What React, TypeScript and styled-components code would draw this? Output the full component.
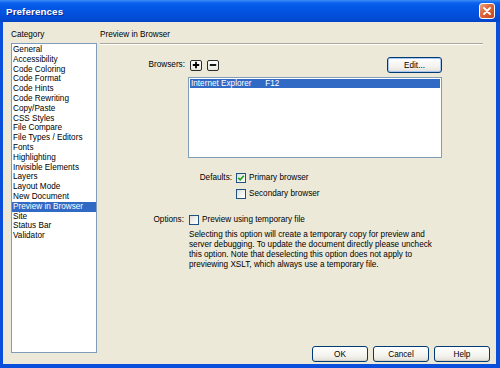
import React from 'react';
import styled, { createGlobalStyle } from 'styled-components';

const GlobalStyle = createGlobalStyle`
  html, body {
    margin: 0;
    padding: 0;
    background: #ffffff;
  }
  body {
    font-family: "Liberation Sans", Arial, sans-serif;
    font-size: 8.2px;
    color: #000;
  }
`;

const Window = styled.div`
  width: 500px;
  height: 368px;
  display: flex;
  flex-direction: column;
  background: #0a4fdc;
  box-sizing: border-box;
`;

const TitleBar = styled.div`
  height: 22px;
  flex: none;
  display: flex;
  align-items: center;
  justify-content: space-between;
  padding: 0 5px 0 6px;
  background: linear-gradient(
    to bottom,
    #3d8cf7 0px,
    #0a61ee 3px,
    #0358e6 7px,
    #0354e1 50%,
    #024bd4 85%,
    #0143c4 100%
  );
`;

const Title = styled.span`
  color: #fff;
  font-weight: bold;
  font-size: 9.8px;
  letter-spacing: 0.1px;
  text-shadow: 1px 1px 0 #0a2a9a;
`;

const CloseButton = styled.div`
  width: 14px;
  height: 14px;
  border: 1px solid #fff;
  border-radius: 3px;
  display: flex;
  align-items: center;
  justify-content: center;
  background: linear-gradient(135deg, #f0a585 0%, #e06a3f 40%, #c8441a 100%);
`;

const Body = styled.div`
  flex: 1;
  display: flex;
  margin: 0 4px 4px 3px;
  padding: 8px 6px 2px 8px;
  background: #ece9d8;
`;

const CategoryColumn = styled.div`
  width: 86px;
  display: flex;
  flex-direction: column;
`;

const PaneLabel = styled.div`
  height: 10px;
  line-height: 10px;
  white-space: nowrap;
`;

const CategoryList = styled.div`
  flex: 1;
  margin: 3px 0 9px;
  padding: 1px 0;
  border: 1px solid #7f9db9;
  background: #fff;
`;

const CategoryItem = styled.div<{ $selected?: boolean }>`
  height: 9.8px;
  line-height: 9.8px;
  padding-left: 1px;
  white-space: nowrap;
  background: ${(p) => (p.$selected ? '#316ac5' : 'transparent')};
  color: ${(p) => (p.$selected ? '#fff' : '#000')};
`;

const MainColumn = styled.div`
  flex: 1;
  margin-left: 3px;
  display: flex;
  flex-direction: column;
`;

const Separator = styled.div`
  height: 1px;
  margin: 3px 7px 0 0;
  background: #aca899;
  border-bottom: 1px solid #fff;
`;

const Form = styled.div`
  width: 342px;
  display: flex;
  flex-direction: column;
`;

const Row = styled.div<{ $top: number; $indent?: number }>`
  display: flex;
  align-items: center;
  margin-top: ${(p) => p.$top}px;
  margin-left: ${(p) => p.$indent ?? 0}px;
`;

const FieldLabel = styled.span<{ $width: number }>`
  width: ${(p) => p.$width}px;
  flex: none;
  text-align: right;
  line-height: 10px;
  white-space: nowrap;
`;

const IconButton = styled.div`
  width: 10px;
  height: 9px;
  margin-left: 5px;
  border: 1px solid #2b2b2b;
  border-radius: 2px;
  background: linear-gradient(#ffffff, #e9e7de);
  display: flex;
  align-items: center;
  justify-content: center;
`;

const PushButton = styled.div<{ $default?: boolean; $width: number }>`
  width: ${(p) => p.$width}px;
  height: 16px;
  box-sizing: border-box;
  border: 1px solid #003c74;
  border-radius: 3px;
  display: flex;
  align-items: center;
  justify-content: center;
  background: linear-gradient(#ffffff 0%, #f4f3ee 60%, #e3e1d7 100%);
  box-shadow: ${(p) =>
    p.$default ? 'inset 0 0 0 1px #a9c6f3' : 'inset 0 -1px 0 #d6d0c5'};
`;

const BrowserList = styled.div`
  margin: 4px 0 0 88px;
  width: 254px;
  height: 81px;
  box-sizing: border-box;
  border: 1px solid #7f9db9;
  background: #fff;
  padding: 1px;
`;

const BrowserItem = styled.div<{ $selected?: boolean }>`
  height: 9px;
  line-height: 9px;
  padding-left: 1px;
  white-space: pre;
  background: ${(p) => (p.$selected ? '#316ac5' : 'transparent')};
  color: ${(p) => (p.$selected ? '#fff' : '#000')};
`;

const CheckBox = styled.span`
  width: 10px;
  height: 10px;
  flex: none;
  box-sizing: border-box;
  border: 1px solid #1c5180;
  background: linear-gradient(135deg, #dcdcd7 0%, #f4f4f1 60%, #ffffff 100%);
  display: flex;
  align-items: center;
  justify-content: center;
`;

const CheckText = styled.span`
  margin-left: 3px;
  line-height: 10px;
  white-space: nowrap;
`;

const Description = styled.p`
  margin: 5px 0 0 89px;
  line-height: 10px;
  white-space: nowrap;
`;

const ButtonRow = styled.div`
  margin-top: auto;
  display: flex;
  justify-content: flex-end;
  gap: 5px;
`;

const categories = [
  'General',
  'Accessibility',
  'Code Coloring',
  'Code Format',
  'Code Hints',
  'Code Rewriting',
  'Copy/Paste',
  'CSS Styles',
  'File Compare',
  'File Types / Editors',
  'Fonts',
  'Highlighting',
  'Invisible Elements',
  'Layers',
  'Layout Mode',
  'New Document',
  'Preview in Browser',
  'Site',
  'Status Bar',
  'Validator',
];

const Check: React.FC<{ checked?: boolean }> = ({ checked }) => (
  <CheckBox>
    {checked && (
      <svg width="8" height="8" viewBox="0 0 8 8">
        <path d="M1.2 3.8 L3.2 5.8 L6.8 1.8" fill="none" stroke="#21a121" strokeWidth="1.7" />
      </svg>
    )}
  </CheckBox>
);

export default function App() {
  return (
    <>
      <GlobalStyle />
      <Window>
        <TitleBar>
          <Title>Preferences</Title>
          <CloseButton>
            <svg width="10" height="10" viewBox="0 0 10 10">
              <path d="M2 2 L8 8 M8 2 L2 8" stroke="#fff" strokeWidth="1.8" strokeLinecap="round" />
            </svg>
          </CloseButton>
        </TitleBar>
        <Body>
          <CategoryColumn>
            <PaneLabel>Category</PaneLabel>
            <CategoryList>
              {categories.map((c) => (
                <CategoryItem key={c} $selected={c === 'Preview in Browser'}>
                  {c}
                </CategoryItem>
              ))}
            </CategoryList>
          </CategoryColumn>
          <MainColumn>
            <PaneLabel>Preview in Browser</PaneLabel>
            <Separator />
            <Form>
              <Row $top={12}>
                <FieldLabel $width={85}>Browsers:</FieldLabel>
                <IconButton>
                  <svg width="8" height="8" viewBox="0 0 8 8">
                    <path d="M4 0.8 V7.2 M0.8 4 H7.2" stroke="#000" strokeWidth="1.8" />
                  </svg>
                </IconButton>
                <IconButton>
                  <svg width="8" height="8" viewBox="0 0 8 8">
                    <path d="M0.8 4 H7.2" stroke="#000" strokeWidth="1.8" />
                  </svg>
                </IconButton>
                <PushButton $default $width={55} style={{ marginLeft: 'auto' }}>
                  Edit...
                </PushButton>
              </Row>
              <BrowserList>
                <BrowserItem $selected>{'Internet Explorer      F12'}</BrowserItem>
              </BrowserList>
              <Row $top={15}>
                <FieldLabel $width={132}>Defaults:</FieldLabel>
                <span style={{ width: 4 }} />
                <Check checked />
                <CheckText>Primary browser</CheckText>
              </Row>
              <Row $top={6} $indent={136}>
                <Check />
                <CheckText>Secondary browser</CheckText>
              </Row>
              <Row $top={16}>
                <FieldLabel $width={84}>Options:</FieldLabel>
                <span style={{ width: 5 }} />
                <Check />
                <CheckText>Preview using temporary file</CheckText>
              </Row>
              <Description>
                Selecting this option will create a temporary copy for preview and
                <br />
                server debugging. To update the document directly please uncheck
                <br />
                this option. Note that deselecting this option does not apply to
                <br />
                previewing XSLT, which always use a temporary file.
              </Description>
            </Form>
            <ButtonRow>
              <PushButton $width={56}>OK</PushButton>
              <PushButton $width={56}>Cancel</PushButton>
              <PushButton $width={56}>Help</PushButton>
            </ButtonRow>
          </MainColumn>
        </Body>
      </Window>
    </>
  );
}
